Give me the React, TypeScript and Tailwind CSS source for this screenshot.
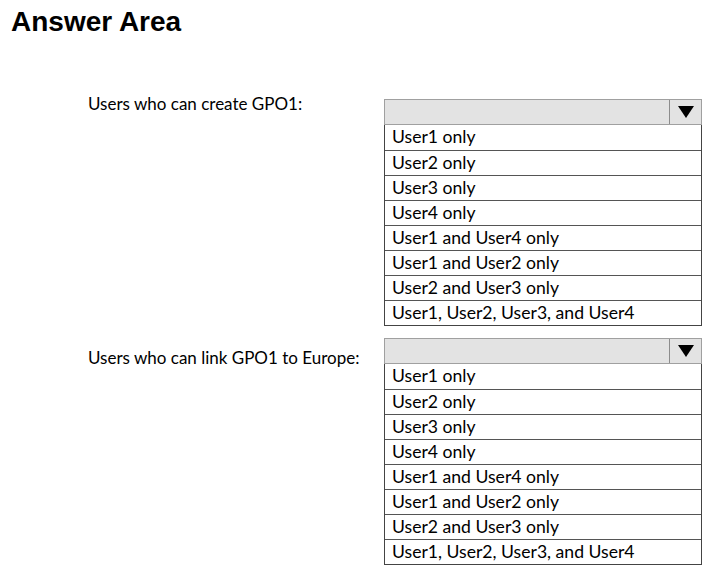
const options = [
  "User1 only",
  "User2 only",
  "User3 only",
  "User4 only",
  "User1 and User4 only",
  "User1 and User2 only",
  "User2 and User3 only",
  "User1, User2, User3, and User4",
];

function Dropdown() {
  return (
    <div className="w-[318px] flex flex-col">
      <div className="flex h-[26px] bg-[#e3e3e3] border border-[#a0a0a0]">
        <div className="flex-1" />
        <div className="w-[32px] border-l border-[#8c8c8c] flex items-center justify-center">
          <svg width="18" height="14" viewBox="0 0 18 14">
            <polygon points="1,1 17,1 9,13" fill="#000" />
          </svg>
        </div>
      </div>
      <div className="border border-t-0 border-[#444]">
        {options.map((o, i) => (
          <div
            key={o}
            className={
              "h-[25px] flex items-center pl-[7px] text-[17.6px] text-black " +
              (i > 0 ? "border-t border-[#555]" : "")
            }
          >
            {o}
          </div>
        ))}
      </div>
    </div>
  );
}

function Question({ label, top }: { label: string; top: string }) {
  return (
    <div className="flex flex-row">
      <div className={"w-[384px] pl-[88px] text-[17px] leading-[20px] text-black " + top}>{label}</div>
      <Dropdown />
    </div>
  );
}

export default function App() {
  return (
    <div
      className="w-[716px] h-[572px] bg-white overflow-hidden"
      style={{ fontFamily: "Lato, 'Liberation Sans', sans-serif" }}
    >
      <h1 className="pl-[11px] pt-[6px] text-[28px] leading-[32px] font-bold text-black font-['Liberation_Sans',Arial,sans-serif]">
        Answer Area
      </h1>
      <div className="flex flex-col gap-[12px] mt-[61px]">
        <Question label="Users who can create GPO1:" top="-mt-[5px]" />
        <Question label="Users who can link GPO1 to Europe:" top="mt-[10px]" />
      </div>
    </div>
  );
}
